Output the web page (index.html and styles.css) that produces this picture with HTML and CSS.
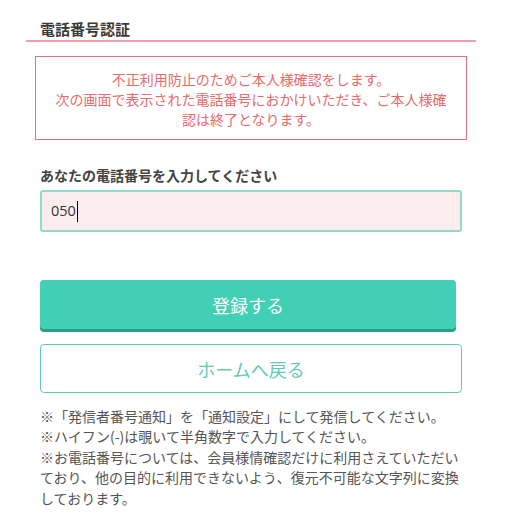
FILE: index.html
```html
<!DOCTYPE html>
<html lang="ja">
<head>
<meta charset="utf-8">
<title>電話番号認証</title>
<link rel="stylesheet" href="styles.css">
</head>
<body>
<main class="page">
  <h1 class="title">電話番号認証</h1>
  <div class="alert">
    不正利用防止のためご本人様確認をします。<br>
    次の画面で表示された電話番号におかけいただき、ご本人様確認は終了となります。
  </div>
  <div class="content">
    <label class="label">あなたの電話番号を入力してください</label>
    <div class="input"><span class="value">050</span><span class="caret"></span></div>
    <button class="btn btn-primary" type="button">登録する</button>
    <button class="btn btn-outline" type="button">ホームへ戻る</button>
    <p class="notes">※「発信者番号通知」を「通知設定」にして発信してください。<br>※ハイフン(-)は覗いて半角数字で入力してください。<br>※お電話番号については、会員様情確認だけに利用さえていただいており、他の目的に利用できないよう、復元不可能な文字列に変換しております。</p>
  </div>
</main>
</body>
</html>
```

FILE: styles.css
```css
html, body {
  margin: 0;
  padding: 0;
  background: #ffffff;
}
body {
  font-family: "Noto Sans CJK JP", "Noto Sans", sans-serif;
  color: #333;
  font-size: 14px;
  line-height: 20px;
}
.page {
  width: 450px;
  margin-left: 26px;
}
.title {
  margin: 0;
  padding: 19px 0 1px 14px;
  font-size: 15px;
  line-height: 20px;
  font-weight: bold;
  color: #3a3a3a;
  border-bottom: 2px solid #f29cad;
}
.alert {
  margin: 14px 9px 0 9px;
  border: 1px solid #e3707a;
  padding: 12px 15px 10px;
  text-align: center;
  color: #e86a6a;
  font-size: 14px;
  line-height: 20px;
}
.content {
  margin: 0 14px;
  display: flex;
  flex-direction: column;
}
.label {
  margin-top: 25px;
  font-weight: bold;
  color: #444;
  font-size: 14px;
  line-height: 20px;
}
.input {
  margin-top: 5px;
  height: 42px;
  box-sizing: border-box;
  border: 2px solid #93d8c9;
  border-radius: 3px;
  background: #fbeded;
  display: flex;
  align-items: center;
  padding-left: 9px;
  color: #333;
  font-size: 14px;
}
.value {
  font-family: "Open Sans", "Noto Sans", sans-serif;
  font-size: 14.5px;
}
.caret {
  display: inline-block;
  width: 1px;
  height: 21px;
  background: #000;
  margin-left: 1px;
}
.btn {
  font-family: inherit;
  font-size: 18px;
  font-weight: normal;
  border-radius: 4px;
  cursor: pointer;
  box-sizing: border-box;
  padding: 0;
}
.btn-primary {
  margin-top: 48px;
  width: 416px;
  height: 49px;
  border: none;
  background: #41d0b5;
  color: #fff;
  box-shadow: 0 3px 0 #2c9f88;
}
.btn-outline {
  margin-top: 15px;
  width: 100%;
  height: 49px;
  border: 1px solid #5fcbb7;
  background: #fff;
  color: #62cab6;
}
.notes {
  margin: 13px 0 0;
  color: #555;
  font-size: 14px;
  line-height: 20.4px;
}
```
